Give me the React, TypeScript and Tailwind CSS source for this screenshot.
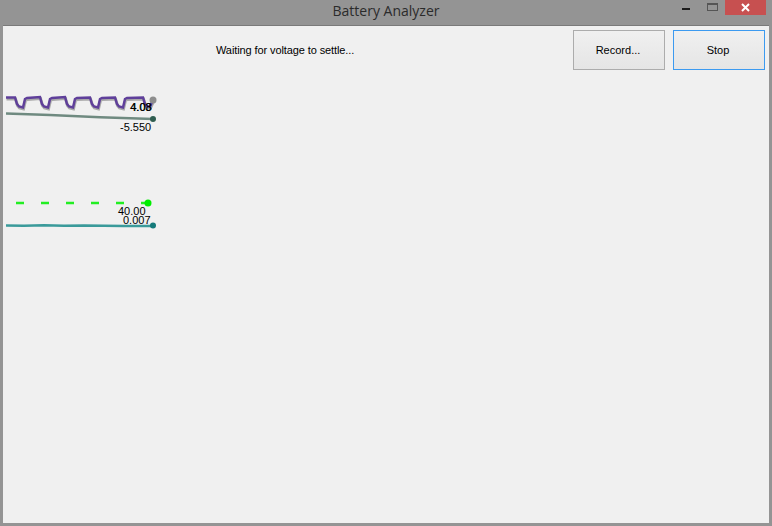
export default function App() {
  const wave =
    "M6 97.5 L15 97.5 L17 104 L19 106.5 L23 107.5 L25 99 L27 98 L40 97 L42 104 L44 106.5 L48 107.5 L50 99 L52 98 L65 97 L67 104 L69 106.5 L73 107.5 L75 99 L77 98 L90 97.5 L92 104 L94 106.5 L98 107.5 L100 99 L102 98 L115 97.5 L117 104 L119 106.5 L123 107.5 L125 99 L127 98 L143 97.5 L145 104 L147 106.5 L150 106.5 L153 100";
  const teal =
    "M6 225.5 L24 225.8 L44 225.3 L64 225.8 L84 225.4 L104 225.8 L124 226 L153 226";
  const ui = { fontFamily: '"Liberation Sans", Arial, sans-serif' };
  return (
    <div className="flex h-[526px] w-[772px] flex-col overflow-hidden bg-[#949494]">
      <header className="relative flex h-[25px] shrink-0 items-center justify-center">
        <span className="relative top-[-2px] text-[14px] text-[#2b2b2b]" style={{ fontFamily: '"Open Sans", sans-serif' }}>
          Battery Analyzer
        </span>
        <div className="absolute right-[6px] top-0 flex items-start">
          <div className="mr-[17px] mt-[8px] h-[2px] w-[8px] bg-[#1c1c1c]" />
          <div className="mr-[7px] mt-[3px] h-[8px] w-[11px] border border-t-2 border-[#555555]" />
          <div className="flex h-[15px] w-[41px] items-center justify-center bg-[#c75050]">
            <svg width="9" height="9" viewBox="0 0 9 9">
              <path d="M1 1 L8 8 M8 1 L1 8" stroke="#ffffff" strokeWidth="2" />
            </svg>
          </div>
        </div>
      </header>
      <main className="mx-[3px] mb-[3px] flex min-h-0 flex-1 flex-col border-t border-[#7a7a7a] bg-[#f0f0f0]" style={ui}>
        <div className="flex h-[44px] shrink-0 items-end justify-end gap-2 pr-[4px]">
          <div className="flex h-[40px] w-[92px] items-center justify-center border border-[#acacac] bg-gradient-to-b from-[#f0f0f0] to-[#e5e5e5] pr-[2px] text-[11px] text-black">
            Record...
          </div>
          <div className="flex h-[40px] w-[92px] items-center justify-center border border-[#3c9af0] bg-gradient-to-b from-[#f0f0f0] to-[#e5e5e5] pr-[2px] text-[11px] text-black">
            Stop
          </div>
        </div>
        <div className="absolute left-[216px] top-[43px] text-[11px] leading-[14px] tracking-[-0.1px] text-black">
          Waiting for voltage to settle...
        </div>
        <div className="relative flex-1">
          <svg className="absolute left-[-3px] top-[-70px]" width="160" height="232" viewBox="0 0 160 232" fill="none">
            <path d={wave} stroke="#a9a9a9" strokeWidth="3" transform="translate(0.5 1.5)" />
            <path d={wave} stroke="#5f3f9a" strokeWidth="2.5" />
            <path d="M6 113.5 L50 115 L100 117.3 L153 119" stroke="#6f8a80" strokeWidth="2.5" />
            <circle cx="153" cy="100" r="3.5" fill="#8e8e8e" />
            <circle cx="153" cy="119" r="3" fill="#2f5d50" />
            <path d="M16 203 H24 M41 203 H49 M66 203 H74 M91 203 H99 M116 203 H124 M141 203 H148" stroke="#22ee22" strokeWidth="2.5" />
            <circle cx="148" cy="203" r="3.5" fill="#00ee00" />
            <path d={teal} stroke="#3a9a9a" strokeWidth="2.5" />
            <circle cx="153" cy="225.5" r="3" fill="#157a7a" />
          </svg>
          <span className="absolute left-[127px] top-[30px] text-[11px] leading-[14px] text-black">4.03</span>
          <span className="absolute left-[127.5px] top-[30px] text-[11px] leading-[14px] text-black">4.08</span>
          <span className="absolute left-[117px] top-[50px] text-[11px] leading-[14px] text-black">-5.550</span>
          <span className="absolute left-[115px] top-[134px] text-[11px] leading-[14px] text-black">40.00</span>
          <span className="absolute left-[120px] top-[143px] text-[11px] leading-[14px] text-black">0.007</span>
        </div>
      </main>
    </div>
  );
}
